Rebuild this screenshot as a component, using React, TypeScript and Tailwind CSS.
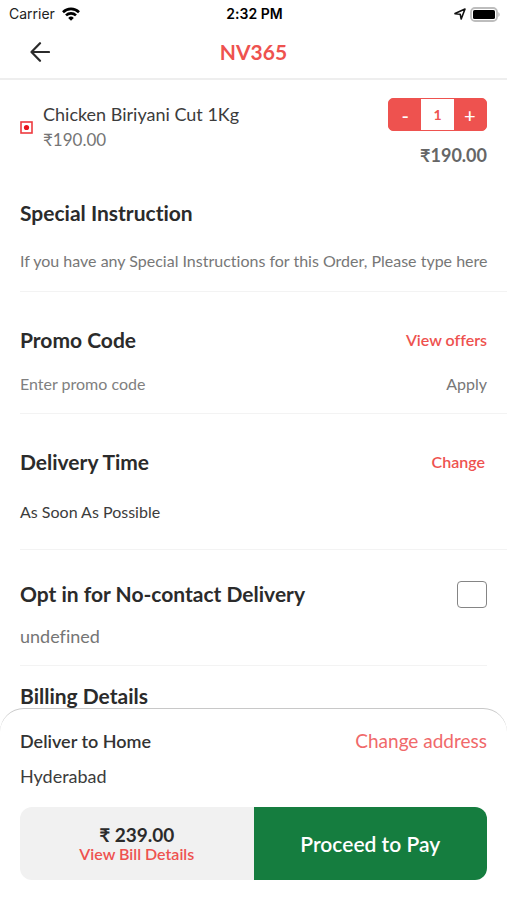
import { useState } from 'react'

const ITEM = { name: 'Chicken Biriyani Cut 1Kg', price: 190 }
const FEES = 49

function formatPrice(amount: number) {
  return amount.toFixed(2)
}

function StatusBar() {
  return (
    <div className="grid h-7 grid-cols-3 items-center pr-[7px] pl-[9px] font-['Inter',sans-serif] text-sm text-[#222]">
      <div className="flex items-center gap-[7px]">
        <span>Carrier</span>
        <svg viewBox="0 0 18 14" className="h-[14px] w-[18px]" fill="none" stroke="#000" strokeWidth="2.6">
          <path d="M1 5.2a11.4 11.4 0 0 1 16 0" />
          <path d="M4 8.4a7.1 7.1 0 0 1 10 0" />
          <path d="M9 13.8 6.2 10.9a4 4 0 0 1 5.6 0z" fill="#000" stroke="none" />
        </svg>
      </div>
      <span className="text-center font-semibold text-black">2:32 PM</span>
      <div className="flex items-center justify-end gap-1">
        <svg viewBox="0 0 12 12" className="h-3 w-3" fill="none" stroke="#111" strokeWidth="1.6" strokeLinejoin="round">
          <path d="M1 5.6 11 1 7.2 11 6.2 6.2z" />
        </svg>
        <svg viewBox="0 0 30 15" className="h-[15px] w-[30px]">
          <rect x="1" y="1" width="26" height="13" rx="4" fill="#fff" stroke="#bdbdbd" strokeWidth="1.8" />
          <rect x="3" y="3" width="22" height="9" rx="1.6" fill="#000" />
          <path d="M28.4 5.2c1.6.6 1.6 4 0 4.6z" fill="#b0b0b0" />
        </svg>
      </div>
    </div>
  )
}

function Heading({ children }: { children: string }) {
  return <h2 className="text-[21px] leading-6 font-bold text-[#2b2b2b]">{children}</h2>
}

export default function App() {
  const [quantity, setQuantity] = useState(1)
  const total = ITEM.price * quantity

  return (
    <div className="flex min-h-screen flex-col bg-white font-['Lato','Noto_Sans',sans-serif] text-[#3c3c3c] [font-variant-ligatures:none]">
      <StatusBar />
      <header className="grid grid-cols-[40px_1fr_40px] items-center border-b-2 border-[#eeeeee] px-5 pt-3 pb-[14px]">
        <button type="button" aria-label="Back" className="flex justify-center">
          <svg viewBox="0 0 20 20" className="h-5 w-5" fill="none" stroke="#2b2b2b" strokeWidth="2.2" strokeLinecap="round" strokeLinejoin="round">
            <path d="M19 10H1.5M10 1.2 1.5 10l8.5 8.8" />
          </svg>
        </button>
        <h1 className="text-center text-[21px] leading-6 font-bold text-[#ee524f]">NV365</h1>
      </header>

      <main className="flex-1 pl-5">
        <section className="flex items-start justify-between pt-[18px] pr-5">
          <div className="flex items-center gap-[10px] pt-1">
            <svg viewBox="0 0 13 13" className="h-[13px] w-[13px]">
              <rect x="1" y="1" width="11" height="11" fill="#fff" stroke="#ee3a3f" strokeWidth="1.6" />
              <circle cx="6.5" cy="6.5" r="2.6" fill="#e8141c" />
            </svg>
            <div>
              <p className="text-lg leading-6">{ITEM.name}</p>
              <p className="mt-[2px] text-[17px] leading-6 text-[#757575]">₹{formatPrice(ITEM.price)}</p>
            </div>
          </div>
          <div className="flex flex-col items-end gap-3">
            <div className="grid h-[33px] w-[99px] grid-cols-3 overflow-hidden rounded-[5px] border border-[#ee524f] bg-[#ee524f] text-xl leading-6 font-medium text-white">
              <button type="button" aria-label="Remove one" onClick={() => setQuantity(Math.max(1, quantity - 1))}>
                -
              </button>
              <span className="flex items-center justify-center bg-white text-sm font-bold text-[#ee524f]">{quantity}</span>
              <button type="button" aria-label="Add one" onClick={() => setQuantity(quantity + 1)}>
                +
              </button>
            </div>
            <p className="text-lg leading-6 font-bold text-[#666]">₹{formatPrice(total)}</p>
          </div>
        </section>

        <section className="border-b border-[#f3f3f3] pt-[34px] pb-[18px]">
          <Heading>Special Instruction</Heading>
          <input
            type="text"
            aria-label="Special Instruction"
            placeholder="If you have any Special Instructions for this Order, Please type here"
            className="mt-6 block h-6 w-full text-base placeholder:text-[#777]"
          />
        </section>

        <section className="border-b border-[#f3f3f3] pt-9 pb-[17px]">
          <div className="flex items-center justify-between pr-5">
            <Heading>Promo Code</Heading>
            <a href="#offers" className="text-base leading-6 font-semibold text-[#ee524f]">
              View offers
            </a>
          </div>
          <div className="mt-5 flex items-center justify-between pr-5">
            <input
              type="text"
              aria-label="Promo Code"
              placeholder="Enter promo code"
              className="h-6 min-w-0 flex-1 text-base placeholder:text-[#808080]"
            />
            <button type="button" className="text-base leading-6 text-[#777]">
              Apply
            </button>
          </div>
        </section>

        <section className="border-b border-[#f3f3f3] pt-9 pb-[25px]">
          <div className="flex items-center justify-between pr-[22px]">
            <Heading>Delivery Time</Heading>
            <button type="button" className="text-base leading-6 font-semibold text-[#ee524f]">
              Change
            </button>
          </div>
          <p className="mt-[26px] text-base leading-6">As Soon As Possible</p>
        </section>

        <section className="mr-5 border-b border-[#f3f3f3] pt-8 pb-[17px]">
          <label className="flex h-6 items-center justify-between">
            <Heading>Opt in for No-contact Delivery</Heading>
            <input
              type="checkbox"
              className="h-[27px] w-[30px] appearance-none rounded-[4px] border border-[#858585] bg-white checked:bg-[#ee524f]"
            />
          </label>
          <p className="mt-[18px] text-lg leading-6 text-[#757575]">undefined</p>
        </section>

        <section className="pt-[18px]">
          <Heading>Billing Details</Heading>
        </section>
      </main>

      <footer className="sticky bottom-0 rounded-t-[24px] border-t border-[#c8c8c8] bg-white px-5 pt-5 pb-5">
        <div className="flex items-center justify-between">
          <p className="text-lg leading-6 font-semibold text-[#333]">Deliver to Home</p>
          <button type="button" className="text-[19px] leading-6 text-[#f0696a]">
            Change address
          </button>
        </div>
        <p className="mt-[11px] text-lg leading-6">Hyderabad</p>
        <div className="mt-[19px] grid h-[73px] grid-cols-2 overflow-hidden rounded-[12px]">
          <div className="flex flex-col items-center justify-center bg-[#f1f1f1]">
            <p className="text-[19px] leading-5 font-bold text-[#2b2b2b]">₹ {formatPrice(total + FEES)}</p>
            <a href="#bill" className="text-base leading-[18px] font-semibold text-[#ee524f]">
              View Bill Details
            </a>
          </div>
          <button type="button" className="bg-[#157d3f] text-[21px] leading-6 font-semibold text-white">
            Proceed to Pay
          </button>
        </div>
      </footer>
    </div>
  )
}
